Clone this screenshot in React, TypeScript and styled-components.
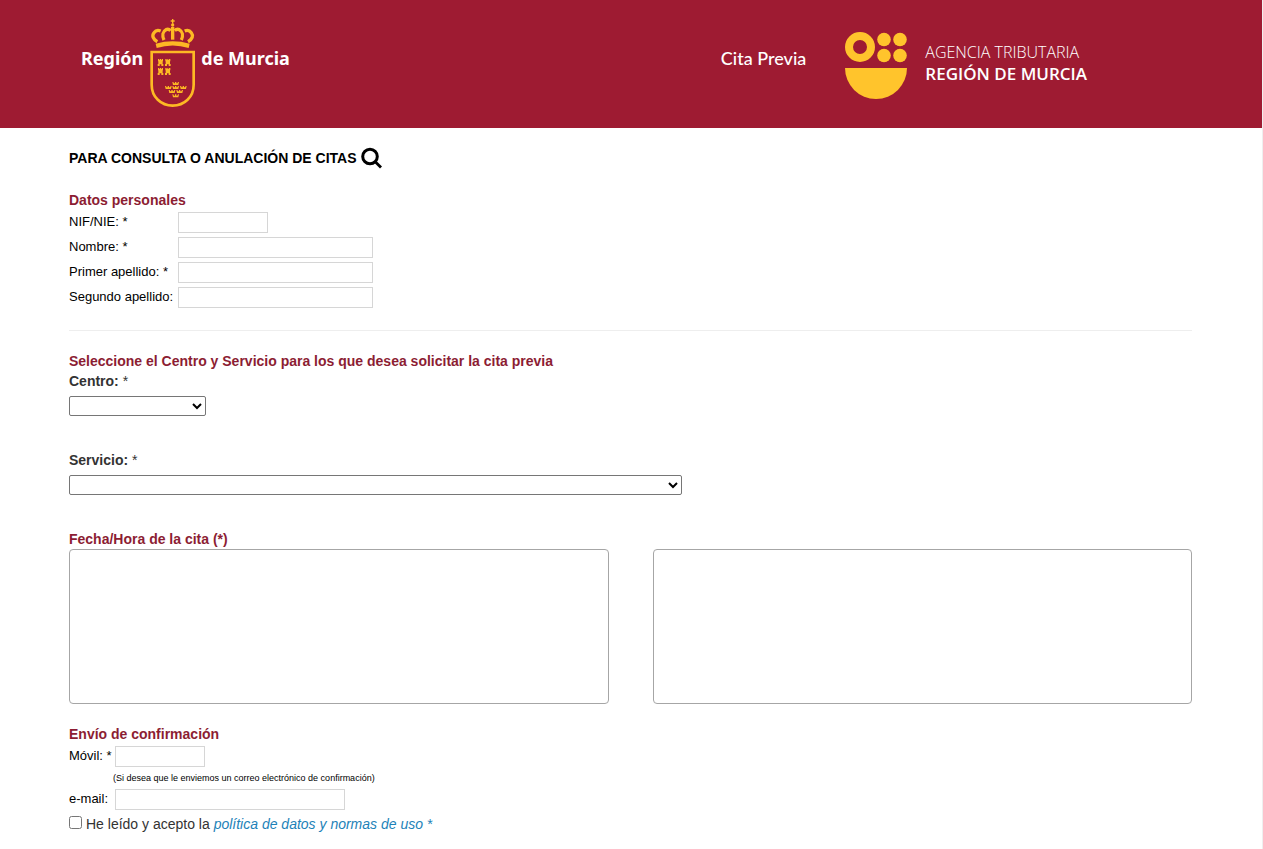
import React from "react";
import styled, { createGlobalStyle } from "styled-components";

const GlobalStyle = createGlobalStyle`
  * { box-sizing: border-box; }
  body {
    margin: 0;
    background: #fff;
    color: #000;
    font-family: "Liberation Sans", Arial, sans-serif;
    font-size: 13px;
  }
`;

const Page = styled.div`
  min-height: 100vh;
  border-right: 1px solid #efefef;
`;

const Header = styled.header`
  display: flex;
  align-items: center;
  justify-content: space-between;
  min-height: 128px;
  padding: 0 175px 3px 81px;
  background: #9e1b32;
  color: #fff;
`;

const RegionLogo = styled.div`
  display: flex;
  align-items: center;
  font: 700 18px/26px "Noto Sans", sans-serif;
  white-space: nowrap;

  svg { margin: 0 1px 0 2px; }
  span { margin-bottom: 10px; }
`;

const HeaderRight = styled.div`
  display: flex;
  align-items: center;
  gap: 39px;
`;

const AppName = styled.span`
  margin-bottom: 10px;
  font: 500 18px/24px Lato, sans-serif;
  white-space: nowrap;
`;

const Agency = styled.div`
  display: flex;
  align-items: center;
  gap: 18px;

  svg { margin-top: 6px; }
`;

const AgencyName = styled.div<{ $strong?: boolean }>`
  font-family: "Open Sans", sans-serif;
  font-size: ${(p) => (p.$strong ? 17 : 16)}px;
  font-weight: ${(p) => (p.$strong ? 600 : 300)};
  line-height: 22px;
  white-space: nowrap;
`;

const Main = styled.main`
  padding: 19px 70px 12px 69px;
`;

const SearchLink = styled.a`
  display: inline-flex;
  align-items: center;
  gap: 4px;
  height: 22px;
  margin-bottom: 1px;
  color: #000;
  font-size: 14px;
  font-weight: bold;
  line-height: 20px;
  text-decoration: none;
`;

const Section = styled.section`
  margin-top: 20px;
`;

const Heading = styled.h2`
  margin: 0;
  color: #8c1d33;
  font-size: 14px;
  font-weight: bold;
  line-height: 20px;
`;

const Row = styled.div<{ $label: number }>`
  display: grid;
  grid-template-columns: ${(p) => p.$label}px 1fr;
  height: 25px;
  padding: 2px 0;
  line-height: 19px;
`;

const TextInput = styled.input<{ $width: number }>`
  width: ${(p) => p.$width}px;
  height: 21px;
  border: 1px solid #d6d6d6;
  padding: 0 3px;
  font: inherit;
`;

const Divider = styled.hr`
  height: 1px;
  margin: 20px 0;
  border: 0;
  background: #eee;
`;

const Choice = styled.div`
  display: flex;
  flex-direction: column;
  align-items: flex-start;
  margin-bottom: 34px;
`;

const ChoiceLabel = styled.label`
  margin-bottom: 5px;
  color: #333;
  font-size: 14px;
  line-height: 20px;
`;

const Dropdown = styled.select<{ $width: number }>`
  width: ${(p) => p.$width}px;
  max-width: 100%;
  height: 20px;
  border: 1px solid #767676;
  border-radius: 2px;
  background: #fff;
  font-size: 13px;
`;

const Slots = styled.div`
  display: grid;
  grid-template-columns: 1fr 1fr;
  gap: 44px;
`;

const SlotList = styled.select`
  width: 100%;
  height: 155px;
  border: 1px solid #a6a6a6;
  border-radius: 4px;
  background: #fff;
  outline: 0;
`;

const Hint = styled.p`
  margin: 0 0 0 44px;
  font-size: 9px;
  line-height: 18px;
`;

const Consent = styled.div`
  display: flex;
  align-items: center;
  gap: 4px;
  height: 24px;
  color: #333;
  font-size: 14px;

  input { width: 13px; height: 13px; margin: 0 0 4px; }
  a { color: #1d82b8; font-style: italic; text-decoration: none; }
`;

const castles = [[38, 132], [60, 132], [38, 159], [60, 159]];
const miniCrowns = [[92, 201], [70, 213], [92, 213], [115, 213], [81, 225], [104, 225], [92, 238]];

function CrownArches() {
  return (
    <g fill="none" stroke="#fdb924" strokeWidth="10">
      <path d="M37 80C24 73 20 62 27 53C32 46 40 45 47 48" />
      <path d="M57 75C51 62 53 49 63 44C68 42 73 43 77 47" />
    </g>
  );
}

function Emblem() {
  return (
    <svg width="55" height="95" viewBox="0 0 165 285" aria-hidden="true">
      <CrownArches />
      <g transform="matrix(-1 0 0 1 166 0)"><CrownArches /></g>
      <g fill="#fdb924">
        <path d="M78 36H88V74H78Z" />
        <circle cx="83" cy="30" r="5" />
        <path d="M81 12H85V16H89V20H85V26H81V20H77V16H81Z" />
        <path d="M32 86Q83 72 134 86L131 99Q83 84 35 99Z" />
        {castles.map(([x, y]) => (
          <path
            key={`${x}-${y}`}
            transform={`translate(${x} ${y})`}
            d="M1 0H5V3H7V0H10V3H12V0H16V7H15V15H17V21H11V16H6V21H0V15H2V7H1Z"
          />
        ))}
        {miniCrowns.map(([x, y]) => (
          <path
            key={`${x}-${y}`}
            transform={`translate(${x} ${y})`}
            d="M-10 0H-7L-5 4H-2V0H2V4H5L7 0H10L8 9H-8Z"
          />
        ))}
      </g>
      <path
        d="M20 111H146V209C146 246 118 272 83 272C48 272 20 246 20 209Z"
        fill="none"
        stroke="#fdb924"
        strokeWidth="8"
      />
    </svg>
  );
}

function AgencyMark() {
  return (
    <svg width="62" height="67" viewBox="0 0 62 67" aria-hidden="true">
      <circle cx="15" cy="15" r="11" fill="none" stroke="#ffc42c" strokeWidth="8" />
      <g fill="#ffc42c">
        <circle cx="39" cy="7.5" r="6.8" />
        <circle cx="55" cy="7.5" r="6.8" />
        <circle cx="39" cy="23.5" r="6.8" />
        <circle cx="55" cy="23.5" r="6.8" />
        <path d="M0 36H62A31 31 0 0 1 0 36Z" />
      </g>
    </svg>
  );
}

function SearchIcon() {
  return (
    <svg width="22" height="22" viewBox="0 0 22 22" fill="none" stroke="#000" aria-hidden="true">
      <circle cx="9" cy="9.5" r="7.3" strokeWidth="3" />
      <path d="M14 14.5L20 20.5" strokeWidth="2.8" />
    </svg>
  );
}

interface FieldProps {
  id: string;
  label: string;
  labelWidth: number;
  width: number;
  type?: string;
}

function Field({ id, label, labelWidth, width, type = "text" }: FieldProps) {
  return (
    <Row $label={labelWidth}>
      <label htmlFor={id}>{label}</label>
      <TextInput id={id} type={type} $width={width} />
    </Row>
  );
}

export default function App() {
  return (
    <>
      <GlobalStyle />
      <Page>
        <Header>
          <RegionLogo>
            <span>Región</span>
            <Emblem />
            <span>de Murcia</span>
          </RegionLogo>
          <HeaderRight>
            <AppName>Cita Previa</AppName>
            <Agency>
              <AgencyMark />
              <div>
                <AgencyName>AGENCIA TRIBUTARIA</AgencyName>
                <AgencyName $strong>REGIÓN DE MURCIA</AgencyName>
              </div>
            </Agency>
          </HeaderRight>
        </Header>
        <Main>
          <SearchLink href="#consulta">
            PARA CONSULTA O ANULACIÓN DE CITAS
            <SearchIcon />
          </SearchLink>
          <form>
            <Section>
              <Heading>Datos personales</Heading>
              <Field id="nif" label="NIF/NIE: *" labelWidth={109} width={90} />
              <Field id="nombre" label="Nombre: *" labelWidth={109} width={195} />
              <Field id="apellido1" label="Primer apellido: *" labelWidth={109} width={195} />
              <Field id="apellido2" label="Segundo apellido:" labelWidth={109} width={195} />
            </Section>
            <Divider />
            <Section>
              <Heading>Seleccione el Centro y Servicio para los que desea solicitar la cita previa</Heading>
              <Choice>
                <ChoiceLabel htmlFor="centro"><b>Centro:</b> *</ChoiceLabel>
                <Dropdown id="centro" $width={137} />
              </Choice>
              <Choice>
                <ChoiceLabel htmlFor="servicio"><b>Servicio:</b> *</ChoiceLabel>
                <Dropdown id="servicio" $width={613} />
              </Choice>
            </Section>
            <section>
              <Heading>Fecha/Hora de la cita (*)</Heading>
              <Slots>
                <SlotList size={8} aria-label="Fecha de la cita" />
                <SlotList size={8} aria-label="Hora de la cita" />
              </Slots>
            </section>
            <Section>
              <Heading>Envío de confirmación</Heading>
              <Field id="movil" label="Móvil: *" labelWidth={46} width={90} type="tel" />
              <Hint>(Si desea que le enviemos un correo electrónico de confirmación)</Hint>
              <Field id="email" label="e-mail:" labelWidth={46} width={230} type="email" />
              <Consent>
                <input id="acepto" type="checkbox" />
                <label htmlFor="acepto">
                  He leído y acepto la <a href="#politica">política de datos y normas de uso *</a>
                </label>
              </Consent>
            </Section>
          </form>
        </Main>
      </Page>
    </>
  );
}
